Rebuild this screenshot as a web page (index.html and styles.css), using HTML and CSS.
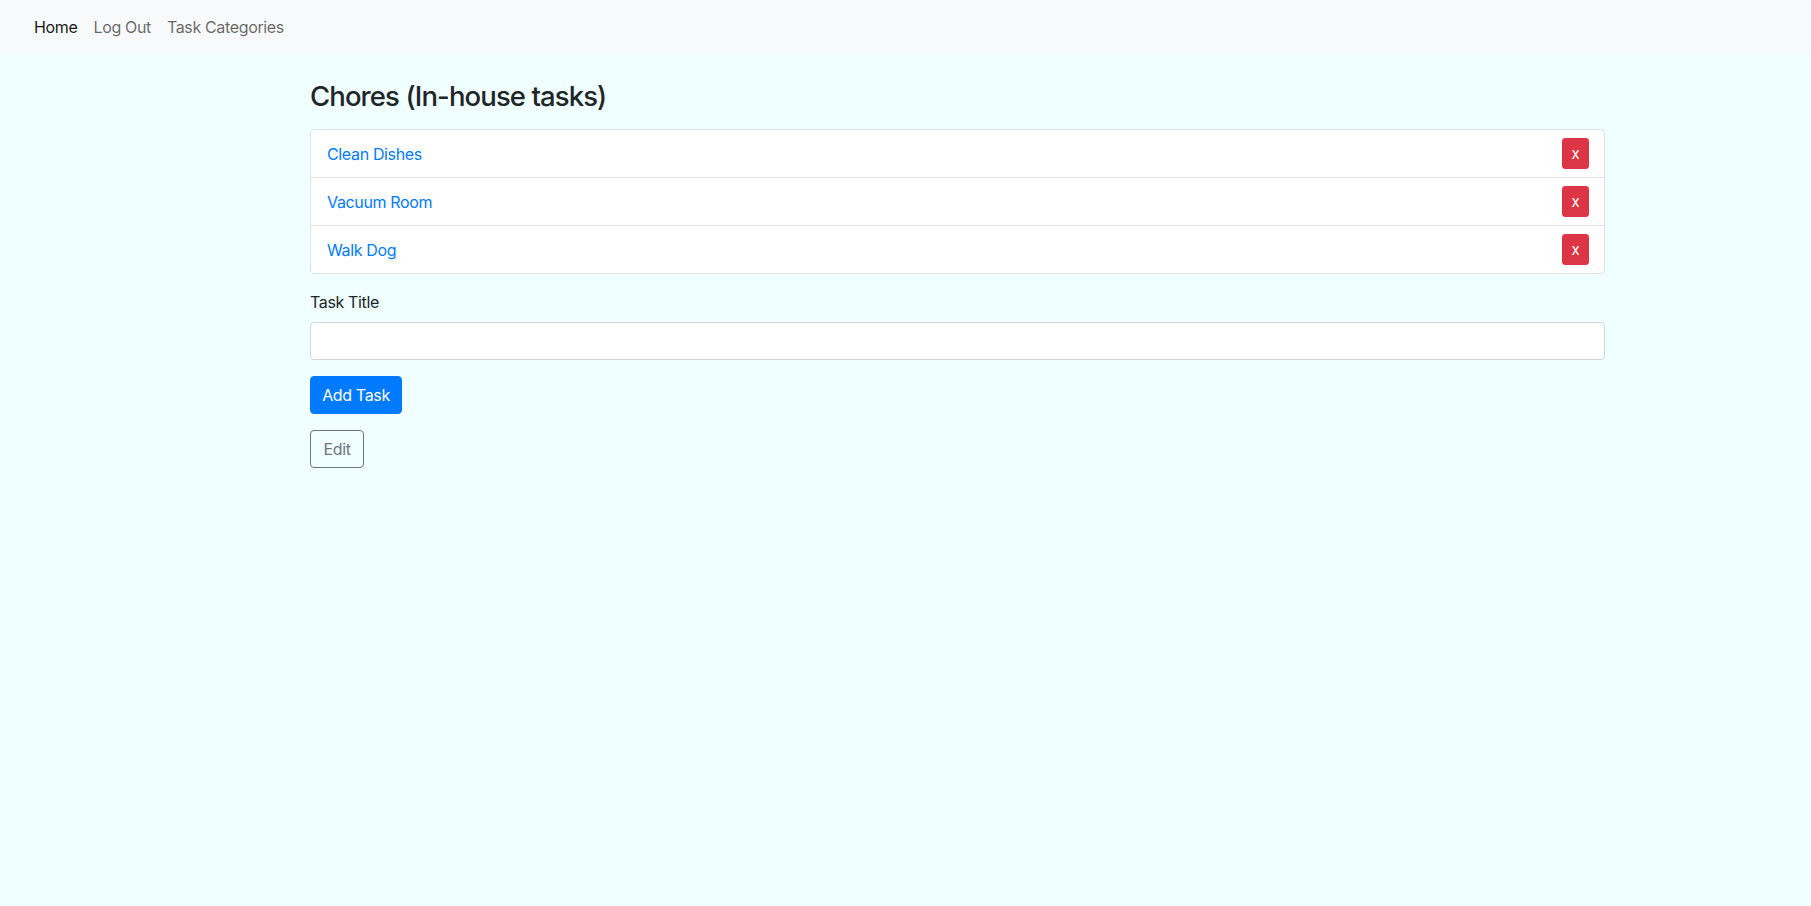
FILE: index.html
```html
<!DOCTYPE html>
<html>
<head>
<meta charset="utf-8">
<link rel="stylesheet" href="styles.css">
</head>
<body>
<nav class="navbar">
  <a class="nav-link active" href="#">Home</a>
  <a class="nav-link" href="#">Log Out</a>
  <a class="nav-link" href="#">Task Categories</a>
</nav>
<main class="content">
  <h3 class="title">Chores (In-house tasks)</h3>
  <ul class="list">
    <li class="item"><a href="#" class="item-link">Clean Dishes</a><button class="btn-del">x</button></li>
    <li class="item"><a href="#" class="item-link">Vacuum Room</a><button class="btn-del">x</button></li>
    <li class="item"><a href="#" class="item-link">Walk Dog</a><button class="btn-del">x</button></li>
  </ul>
  <form class="form">
    <div class="group">
      <label class="label">Task Title</label>
      <input class="input" type="text">
    </div>
    <button type="button" class="btn btn-primary">Add Task</button>
  </form>
  <button type="button" class="btn btn-outline">Edit</button>
</main>
</body>
</html>
```
FILE: styles.css
```css
* { box-sizing: border-box; }
html, body { margin: 0; padding: 0; }
body {
  background: #f0ffff;
  font-family: Inter, "Liberation Sans", sans-serif;
  font-size: 16px;
  line-height: 24px;
  letter-spacing: -0.35px;
  color: #212529;
  min-height: 906px;
}
.navbar {
  background: #f8f9fa;
  height: 54px;
  display: flex;
  align-items: center;
  padding: 0 18px 0 26px;
}
.nav-link {
  color: rgba(0,0,0,0.6);
  text-decoration: none;
  padding: 7px 8px;
  line-height: 24px;
}
.nav-link.active { color: rgba(0,0,0,0.92); }
.content {
  margin-left: 310px;
  width: 1295px;
  padding-top: 25px;
}
.title {
  margin: 0 0 16px;
  font-size: 27.5px;
  line-height: 34px;
  font-weight: 500;
  letter-spacing: -0.9px;
  color: #212529;
}
.list {
  list-style: none;
  margin: 0 0 16px;
  padding: 0;
  background: #fff;
  border: 1px solid #dee2e6;
  border-radius: 4px;
}
.item {
  display: flex;
  align-items: center;
  justify-content: space-between;
  padding: 8px 15px 8px 16px;
  border-bottom: 1px solid #dee2e6;
}
.item:last-child { border-bottom: none; }
.item-link {
  color: #007bff;
  text-decoration: none;
}
.btn-del {
  background: #dc3545;
  border: 1px solid #dc3545;
  color: #fff;
  font-family: inherit;
  font-size: 15px;
  line-height: 21px;
  padding: 4px 8px;
  border-radius: 3px;
  width: 27px;
  height: 31px;
  display: flex;
  align-items: center;
  justify-content: center;
}
.form { margin: 0; }
.group { margin-bottom: 16px; }
.label {
  display: block;
  margin-bottom: 8px;
}
.input {
  display: block;
  width: 100%;
  height: 38px;
  background: #fff;
  border: 1px solid #ced4da;
  border-radius: 4px;
  padding: 6px 12px;
  font-family: inherit;
  font-size: 16px;
}
.btn {
  display: block;
  font-family: inherit;
  font-size: 16px;
  line-height: 24px;
  letter-spacing: -0.35px;
  padding: 6px 0;
  border-radius: 4px;
  height: 38px;
  margin-bottom: 16px;
  white-space: nowrap;
  text-align: center;
}
.btn-primary {
  background: #007bff;
  border: 1px solid #007bff;
  color: #fff;
  width: 92px;
}
.btn-outline {
  background: transparent;
  border: 1px solid #6c757d;
  color: #6c757d;
  width: 54px;
}
```
